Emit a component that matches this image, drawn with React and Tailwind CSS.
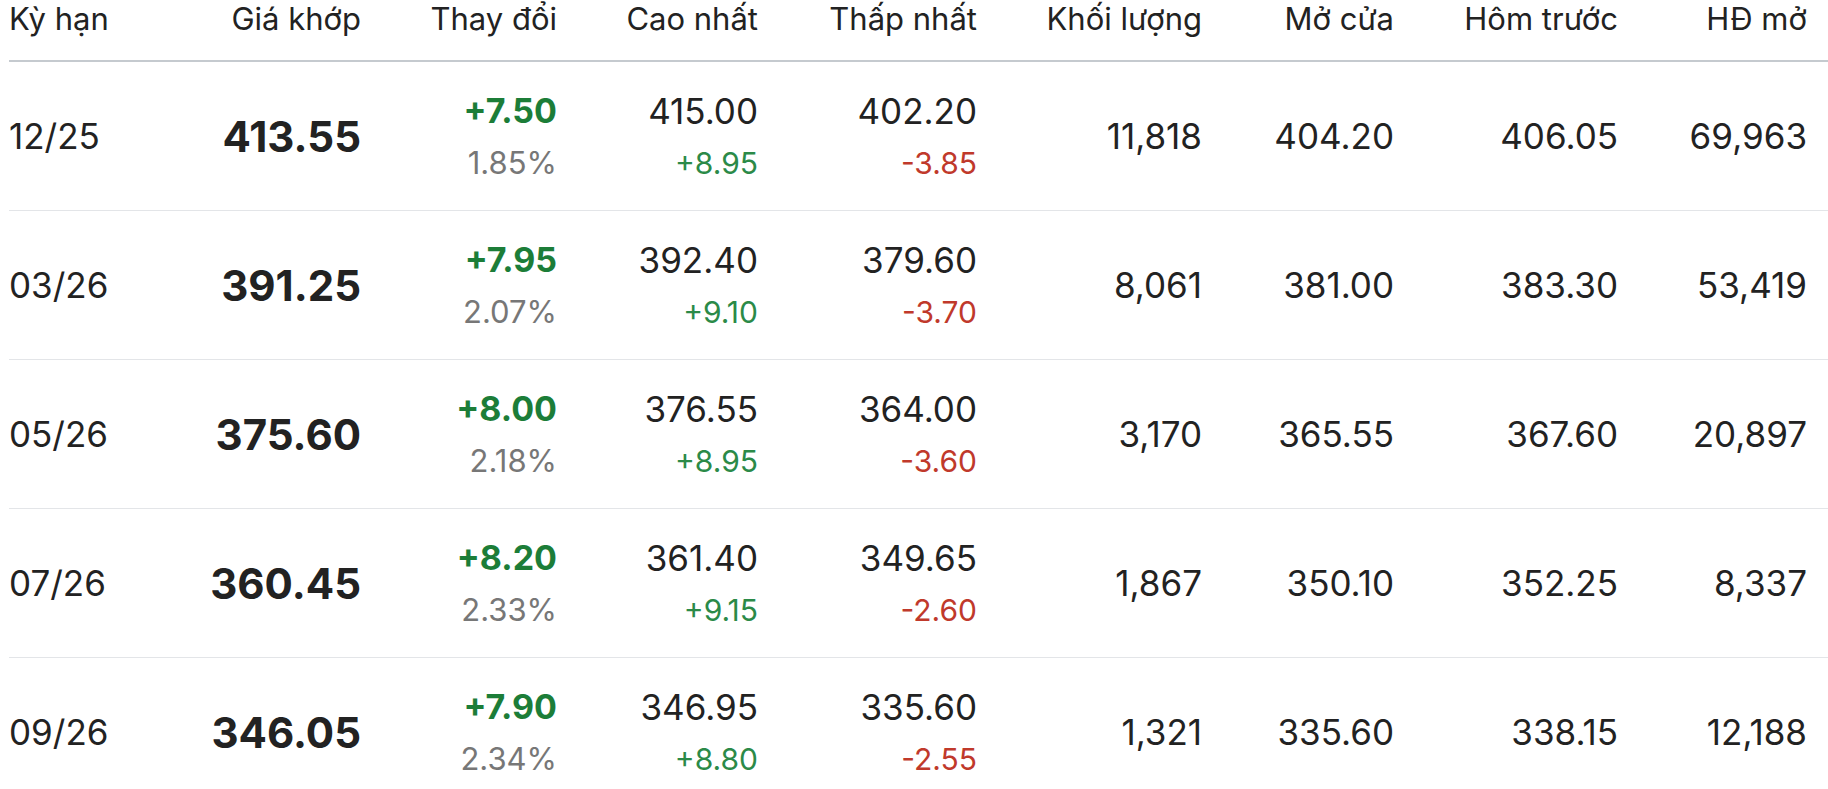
import React from "react";

const rows = [
  { term: "12/25", price: "413.55", change: "+7.50", pct: "1.85%", high: "415.00", highD: "+8.95", low: "402.20", lowD: "-3.85", vol: "11,818", open: "404.20", prev: "406.05", oi: "69,963" },
  { term: "03/26", price: "391.25", change: "+7.95", pct: "2.07%", high: "392.40", highD: "+9.10", low: "379.60", lowD: "-3.70", vol: "8,061", open: "381.00", prev: "383.30", oi: "53,419" },
  { term: "05/26", price: "375.60", change: "+8.00", pct: "2.18%", high: "376.55", highD: "+8.95", low: "364.00", lowD: "-3.60", vol: "3,170", open: "365.55", prev: "367.60", oi: "20,897" },
  { term: "07/26", price: "360.45", change: "+8.20", pct: "2.33%", high: "361.40", highD: "+9.15", low: "349.65", lowD: "-2.60", vol: "1,867", open: "350.10", prev: "352.25", oi: "8,337" },
  { term: "09/26", price: "346.05", change: "+7.90", pct: "2.34%", high: "346.95", highD: "+8.80", low: "335.60", lowD: "-2.55", vol: "1,321", open: "335.60", prev: "338.15", oi: "12,188" },
];

const headers = ["Kỳ hạn", "Giá khớp", "Thay đổi", "Cao nhất", "Thấp nhất", "Khối lượng", "Mở cửa", "Hôm trước", "HĐ mở"];

const cols =
  "grid grid-cols-[152px_200px_196px_201px_219px_225px_192px_224px_189px] pr-[21px]";

export default function App() {
  return (
    <div
      className="w-[1828px] h-[789px] overflow-hidden bg-white pl-[9px] text-[#222]"
      style={{ fontFamily: "Inter, Roboto, 'Liberation Sans', sans-serif" }}
    >
      {/* header */}
      <div className={`${cols} h-[62px] border-b-2 border-[#c5cacf] text-[31px] leading-[38px]`}>
        {headers.map((h, i) => (
          <div key={h} className={i === 0 ? "text-left" : "text-right"}>
            {h}
          </div>
        ))}
      </div>

      {rows.map((r) => (
        <div key={r.term} className={`${cols} h-[149px] items-center border-b border-[#e3e5e8]`}>
          <div className="text-[35px]">{r.term}</div>
          <div className="text-right text-[42px] font-bold">{r.price}</div>
          <div className="flex flex-col items-end gap-[10px]">
            <span className="text-[34px] leading-[44px] font-bold text-[#1c7d38]">{r.change}</span>
            <span className="text-[31px] leading-[40px] text-[#777]">{r.pct}</span>
          </div>
          <div className="flex flex-col items-end gap-[10px]">
            <span className="text-[35px] leading-[44px]">{r.high}</span>
            <span className="text-[30px] leading-[40px] text-[#2b8a48]">{r.highD}</span>
          </div>
          <div className="flex flex-col items-end gap-[10px]">
            <span className="text-[35px] leading-[44px]">{r.low}</span>
            <span className="text-[30px] leading-[40px] text-[#c0392b]">{r.lowD}</span>
          </div>
          <div className="text-right text-[35px]">{r.vol}</div>
          <div className="text-right text-[35px]">{r.open}</div>
          <div className="text-right text-[35px]">{r.prev}</div>
          <div className="text-right text-[35px]">{r.oi}</div>
        </div>
      ))}
    </div>
  );
}
